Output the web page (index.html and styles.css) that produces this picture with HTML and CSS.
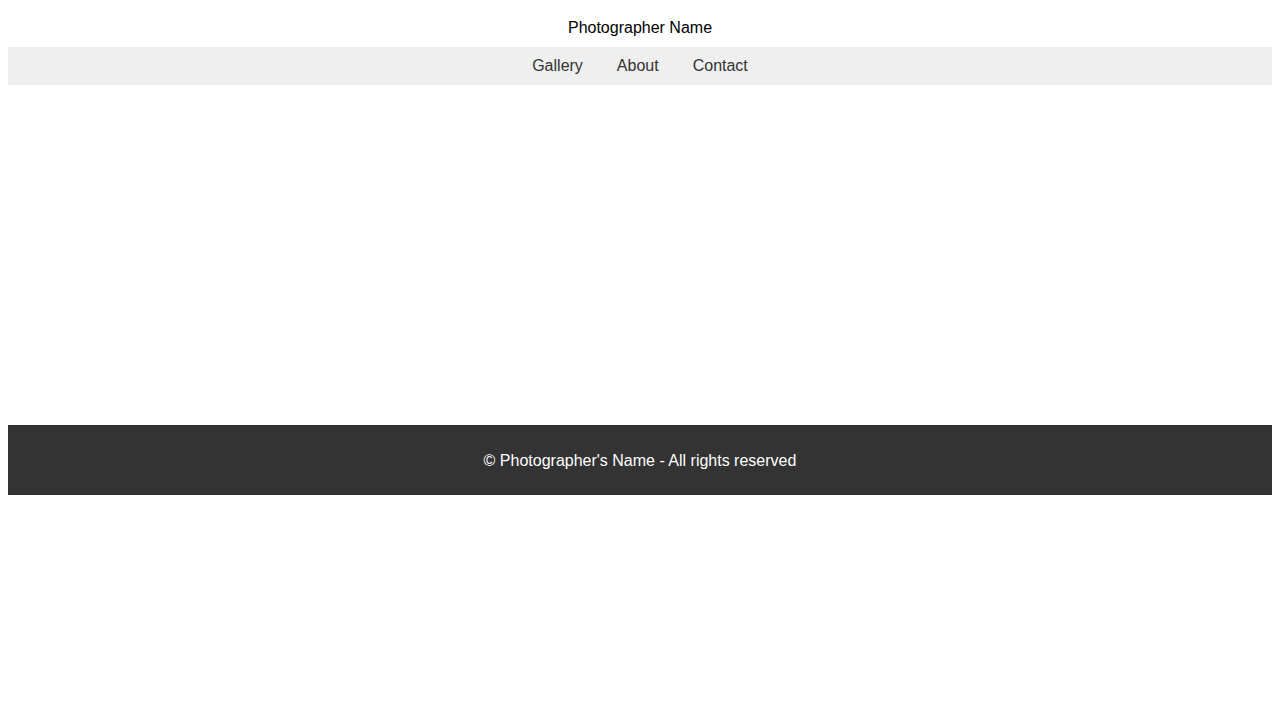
FILE: index.html
```html
<!DOCTYPE html>
<html lang="en">
<head>
<meta charset="utf-8">
<title>Photographer Name</title>
<link rel="stylesheet" href="styles.css">
</head>
<body>
<header class="site-header">
  <h1 class="site-title">Photographer Name</h1>
</header>
<nav class="site-nav">
  <a href="#gallery" class="nav-link">Gallery</a>
  <a href="#about" class="nav-link">About</a>
  <a href="#contact" class="nav-link">Contact</a>
</nav>
<main class="content"></main>
<footer class="site-footer">
  <p class="footer-text">&copy; Photographer's Name - All rights reserved</p>
</footer>
</body>
</html>
```

FILE: styles.css
```css
body {
  margin: 8px;
  font-family: "Liberation Sans", Arial, sans-serif;
  font-size: 16px;
  background: #fff;
}

.site-header {
  padding: 11px 0 10px;
  text-align: center;
}

.site-title {
  margin: 0;
  font-size: 16px;
  font-weight: normal;
  line-height: 18px;
  color: #000;
}

.site-nav {
  display: flex;
  justify-content: center;
  gap: 34px;
  background: #efefef;
  padding: 10px 0;
  height: 18px;
}

.nav-link {
  color: #333;
  text-decoration: none;
  line-height: 18px;
}

.content {
  min-height: 340px;
}

.site-footer {
  background: #333;
  color: #fff;
  text-align: center;
  padding: 27px 0 25px;
}

.footer-text {
  margin: 0;
  line-height: 18px;
}
```
